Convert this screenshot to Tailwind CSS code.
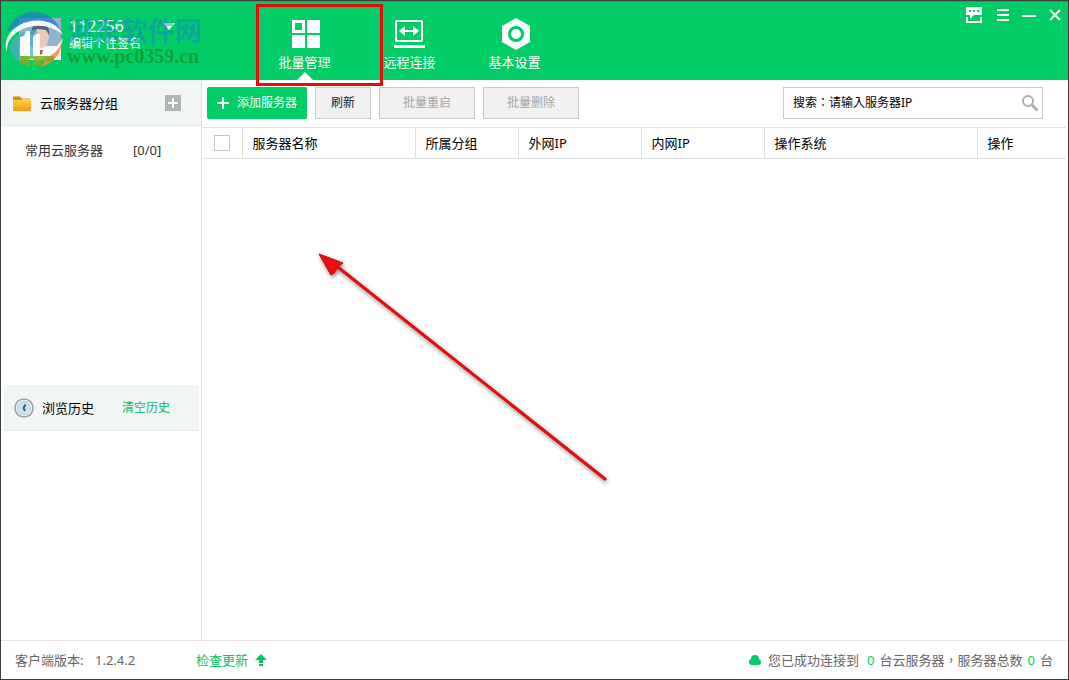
<!DOCTYPE html>
<html lang="zh-CN">
<head>
<meta charset="utf-8">
<meta name="viewport" content="width=device-width, initial-scale=1">
<title>云服务器批量管理</title>
<script src="https://cdn.jsdelivr.net/npm/@tailwindcss/browser@4"></script>
</head>
<body class="relative flex min-h-screen flex-col border border-[#3a3f3d] bg-white font-['Noto_Sans','Noto_Sans_CJK_SC',sans-serif] text-[13px] leading-5 text-black">
<header class="flex h-[79px] items-start border-t border-[#05b45c] bg-[#02cc66] text-white">
  <div class="flex w-[255px] shrink-0 gap-2 pt-4 pl-[18px]">
    <svg class="h-[42px] w-[42px]" viewBox="0 0 42 42" aria-hidden="true">
      <rect width="42" height="42" fill="#f4f4f2"/>
      <rect width="42" height="28" fill="#8fb4d2"/>
      <ellipse cx="22" cy="18" rx="8" ry="12" fill="#e9c9b8"/>
      <path d="M12 17c0-8 4-13 10-12 6 0 9 5 8 12l-3-5-9-1-4 6z" fill="#50667d"/>
      <path d="M3 42c2-8 8-12 18-12s17 4 18 12z" fill="#fff"/>
      <path d="M19 32h5l-2 8z" fill="#c55a3a"/>
    </svg>
    <div class="w-[142px]">
      <div class="flex h-4 items-center justify-between pr-[36px]">
        <span class="text-base leading-4">112256</span>
        <button aria-label="账户菜单"><svg class="h-2 w-3" viewBox="0 0 12 8"><path d="M0 1h12L6 8z" fill="#fff"/></svg></button>
      </div>
      <button class="block text-xs leading-5">编辑个性签名</button>
    </div>
  </div>
  <nav class="flex grow" aria-label="主导航">
    <button class="relative flex h-[78px] w-[105px] flex-col items-center gap-[2px] pt-4 pr-2">
      <svg class="h-8 w-8" viewBox="0 0 32 32" fill="#fff" aria-hidden="true"><path fill-rule="evenodd" d="M3 2h13v13H3zM6 5v7h7V5z"/><path d="M18 2h13v13H18zM3 17h13v13H3zM18 17h13v13H18z"/></svg>
      <span class="leading-5">批量管理</span>
      <svg class="absolute bottom-0 left-[41px] h-2 w-4" viewBox="0 0 16 8" aria-hidden="true"><path d="M8 0l8 8H0z" fill="#fff"/></svg>
    </button>
    <button class="flex h-[78px] w-[105px] flex-col items-center gap-[2px] pt-4 pr-2">
      <svg class="h-8 w-8" viewBox="0 0 32 32" aria-hidden="true"><rect x="2" y="3" width="26" height="20" rx="1" fill="none" stroke="#fff" stroke-width="2"/><path d="M0 27h31v3H0z" fill="#fff"/><path d="M5 13l6-5v4h8V8l6 5-6 5v-4h-8v4z" fill="#fff"/></svg>
      <span class="leading-5">远程连接</span>
    </button>
    <button class="flex h-[78px] w-[105px] flex-col items-center gap-[2px] pt-4 pr-2">
      <svg class="h-8 w-8" viewBox="0 0 32 32" aria-hidden="true"><path d="M17 0l14 8v16l-14 8-14-8V8z" fill="#fff"/><circle cx="17" cy="16" r="6.500" fill="none" stroke="#02cc66" stroke-width="3"/></svg>
      <span class="leading-5">基本设置</span>
    </button>
  </nav>
  <div class="flex items-center gap-4 pt-1 pr-[7px]">
    <button aria-label="反馈"><svg class="h-[18px] w-[18px]" viewBox="0 0 18 18" fill="#fff"><path fill-rule="evenodd" d="M1 1h16v8H9l-4 4V9H1zM4 4v2h2V4zM8 4v2h2V4zM12 4v2h2V4z"/><path d="M1 11h2v4h12v-4h2v6H1z"/></svg></button>
    <button aria-label="菜单" class="-ml-[2px]"><svg class="h-3 w-3" viewBox="0 0 12 12" fill="#fff"><path d="M0 0h12v2H0zM0 5h12v2H0zM0 10h12v2H0z"/></svg></button>
    <button aria-label="最小化" class="-mx-[3px]"><svg class="h-3 w-[14px]" viewBox="0 0 14 12"><path d="M0 6h14v2H0z" fill="#fff"/></svg></button>
    <button aria-label="关闭"><svg class="h-3 w-3" viewBox="0 0 12 12"><path d="M1 1l10 10M11 1L1 11" stroke="#fff" stroke-width="2"/></svg></button>
  </div>
</header>

<div class="flex grow">
  <aside class="flex w-[201px] shrink-0 flex-col border-r border-[#dfe2e2]">
    <div class="flex h-[46px] items-center border-b border-[#e6eaea] bg-[#f1f5f4] pl-[11px]">
      <svg class="h-5 w-5" viewBox="0 0 20 20" aria-hidden="true"><defs><linearGradient id="folder" x2="0" y2="1"><stop stop-color="#ffd24d"/><stop offset="1" stop-color="#f29b12"/></linearGradient></defs><path d="M1 3.500h7l2 2h8v12H1z" fill="#d98d10"/><path d="M1 7h8l2-1h8v11l-1 1H2l-1-1z" fill="url(#folder)"/></svg>
      <h2 class="ml-2">云服务器分组</h2>
      <button class="ml-auto mr-5" aria-label="添加分组"><svg class="h-4 w-4" viewBox="0 0 16 16"><path d="M0 0h16v16H0z" fill="#adb8b3"/><path d="M8 3v10M3 8h10" stroke="#fff" stroke-width="2"/></svg></button>
    </div>
    <a href="#common" class="flex h-12 items-center pl-6 text-[#333]"><span class="w-[108px]">常用云服务器</span><span>[0/0]</span></a>
    <div class="mx-[3px] mr-[2px] mt-[211px] flex h-[46px] items-center border-b border-[#e6eaea] bg-[#f1f5f4] pl-[10px]">
      <svg class="h-5 w-5" viewBox="0 0 20 20" aria-hidden="true"><circle cx="10" cy="10" r="9" fill="#f7f7f7" stroke="#999fa2" stroke-width="1.500"/><circle cx="10" cy="10" r="6.500" fill="#c6e4f5" stroke="#b4c8d4"/><path d="M11.500 6.500L9.500 10l1.500 3" fill="none" stroke="#31556f" stroke-width="1.800"/></svg>
      <h2 class="ml-2">浏览历史</h2>
      <button class="ml-7 text-xs text-[#12b765]">清空历史</button>
    </div>
  </aside>

  <main class="min-w-0 grow pr-[2px] pl-px">
    <div class="flex h-[47px] items-start gap-2 pt-[7px] pr-[23px] pl-1 text-xs">
      <button class="flex h-8 w-[100px] items-center justify-center gap-2 rounded-xs bg-[#02cc66] text-white"><svg class="h-3 w-3" viewBox="0 0 12 12" aria-hidden="true"><path d="M6 0v12M0 6h12" stroke="#fff" stroke-width="2"/></svg>添加服务器</button>
      <button class="h-8 w-14 border border-[#cfcfcf] bg-[#f1f1f1] text-[#222]">刷新</button>
      <button disabled class="h-8 w-24 border border-[#c9c9c9] bg-[#f1f1f1] text-[#a5a5a5]">批量重启</button>
      <button disabled class="h-8 w-24 border border-[#c9c9c9] bg-[#f1f1f1] text-[#a5a5a5]">批量删除</button>
      <div class="ml-auto flex h-8 w-[260px] items-center border border-[#c9cccb] px-1">
        <input id="search" lang="zh-TW" aria-label="搜索服务器" class="min-w-0 grow pl-[5px] font-['Noto_Sans','Noto_Sans_CJK_TC',sans-serif] text-xs placeholder:text-black placeholder:opacity-100 focus:outline-none" placeholder="搜索：请输入服务器IP">
        <button aria-label="搜索"><svg class="h-4 w-4" viewBox="0 0 16 16" fill="none" stroke="#aab0ae"><circle cx="6" cy="6" r="5" stroke-width="2"/><path d="M10 10l5.500 5.500" stroke-width="3"/></svg></button>
      </div>
    </div>
    <table class="w-full table-fixed border-y border-[#e0e2e2] text-left">
      <colgroup><col class="w-[39px]"><col class="w-[173px]"><col class="w-[103px]"><col class="w-[123px]"><col class="w-[123px]"><col class="w-[213px]"><col></colgroup>
      <thead><tr class="h-[31px] *:border-r *:border-[#e0e2e2] *:pl-[10px] *:font-normal *:last:border-r-0">
        <th><input type="checkbox" aria-label="全选" class="ml-px block h-4 w-4 appearance-none border border-[#c4c8c7] bg-white"></th>
        <th>服务器名称</th><th>所属分组</th><th>外网IP</th><th>内网IP</th><th>操作系统</th><th>操作</th>
      </tr></thead>
    </table>
  </main>
</div>

<footer class="flex h-[39px] items-center border-t border-[#e8e3e4] pr-[15px] pl-[14px] text-[#666]">
  <span class="w-20">客户端版本:</span><span class="w-[101px]">1.2.4.2</span>
  <button class="flex items-center gap-[7px] text-[#02c564]">检查更新<svg class="h-3 w-3" viewBox="0 0 12 12" fill="#02c564" aria-hidden="true"><path d="M6 0l6 6H8v3H4V6H0zM4 10h4v2H4z"/></svg></button>
  <p class="ml-auto flex items-center"><svg class="mr-[7px] h-3 w-3" viewBox="0 0 12 12" fill="#02cc66" aria-hidden="true"><circle cx="6" cy="5" r="4"/><rect y="5" width="12" height="6" rx="3"/></svg>您已成功连接到<span class="mx-[5px] ml-2 text-[#02cc66]">0</span>台云服务器<span lang="zh-TW" class="font-['Noto_Sans_CJK_TC',sans-serif]">，</span>服务器总数<span class="mx-[5px] text-[#02cc66]">0</span>台</p>
</footer>

<!-- Site watermark -->
<div class="pointer-events-none absolute top-[9px] left-1 flex gap-1" aria-hidden="true">
  <svg class="h-[58px] w-[58px]" viewBox="0 0 58 58">
    <path d="M2 23C6 9 16 2 29 2c14 0 24 9 27 20-7-7-16-10-27-9C17 13 8 18 2 23z" fill="#1f82c4" opacity=".75"/>
    <path d="M5 40c-1-8 5-14 13-18l14-3-2 27-15 6C10 50 7 45 5 40z" fill="#4bb0cc" opacity=".75"/>
    <path d="M57 27c1 15-8 27-22 30 4-4 6-8 7-13 6-4 12-9 15-17z" fill="#f08a3c" opacity=".85"/>
    <path d="M2 42C-3 28 8 16 22 12c15-4 30 0 36 13-9-8-22-11-34-8C11 20 1 29 2 42z" fill="#fff" opacity=".95"/>
    <path d="M24 46c15 0 27-6 34-18-3 15-17 24-34 21z" fill="#fff" opacity=".95"/>
    <path d="M15 46h34v5H36v5h-8v-7h-3v8l-10-4z" fill="#7fae1c" opacity=".85"/>
    <path d="M15 27l4-1 2-5h4v25H15zM28 27l3-3h4v22h-7z" fill="#fff"/>
    <path d="M19 12l1 2 2 .3-1.500 1.400.4 2.300-1.900-1-1.900 1 .4-2.300-1.500-1.400 2-.3z" fill="#fff"/>
  </svg>
  <div class="whitespace-nowrap pt-[6px]">
    <div class="font-['Noto_Sans_CJK_SC',sans-serif] text-[27px] leading-7 font-bold text-[#1683d0]/50">河东软件网</div>
    <div class="font-['Liberation_Serif',serif] text-[20px] leading-6 font-bold text-[#148218]/60">www.pc0359.cn</div>
  </div>
</div>

<!-- Annotation box and pointer -->
<div class="pointer-events-none absolute top-[3px] left-[255px] h-[82px] w-[127px] border-3 border-[#e80c08]" aria-hidden="true"></div>
<svg class="pointer-events-none absolute top-[249px] left-[314px] h-[240px] w-[300px]" viewBox="0 0 300 240" aria-hidden="true">
  <defs><filter id="shadow"><feDropShadow dx="1" dy="2" stdDeviation="2" flood-opacity=".5"/></filter></defs>
  <g filter="url(#shadow)"><path d="M24 18L290 229" stroke="#c00a0a" stroke-width="3" stroke-linecap="round"/><path d="M24 18L290 229" stroke="#ed0909" stroke-width="2" stroke-linecap="round"/><path d="M4 4l24 9-4 3-5 7-3 2z" fill="#ed0909" stroke="#b80909"/></g>
</svg>
</body>
</html>
